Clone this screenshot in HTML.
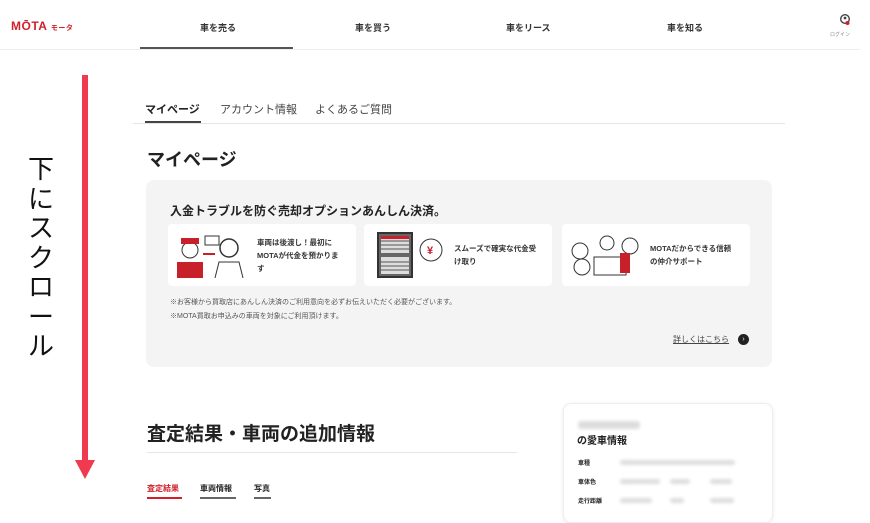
<!DOCTYPE html>
<html><head><meta charset="utf-8"><style>
*{margin:0;padding:0;box-sizing:border-box}
body{width:870px;height:509px;overflow:hidden;background:#fff;font-family:"Liberation Sans","Noto Sans CJK JP",sans-serif;color:#222;position:relative}
.a{position:absolute;white-space:nowrap}
.nav{font-size:9px;font-weight:bold;color:#333}
.card{position:absolute;background:#fff;border-radius:4px;top:224px;height:62px;width:188px}
.ct{position:absolute;font-size:7.5px;font-weight:bold;line-height:13px;color:#333}
.blur{position:absolute;height:5px;background:#ddd;border-radius:3px;filter:blur(1.5px)}
</style></head><body>
<div class="a" style="left:11px;top:19px;font-size:12px;font-weight:bold;color:#d0202a;letter-spacing:0.5px">MŌTA <span style="font-size:7px">モータ</span></div>
<div class="a nav" style="left:200px;top:21px">車を売る</div>
<div class="a nav" style="left:355px;top:21px">車を買う</div>
<div class="a nav" style="left:506px;top:21px">車をリース</div>
<div class="a nav" style="left:667px;top:21px">車を知る</div>
<svg class="a" style="left:839px;top:14px" width="12" height="13" viewBox="0 0 12 13"><circle cx="6" cy="5" r="4.3" fill="none" stroke="#444" stroke-width="1.4"/><circle cx="6" cy="4" r="1.4" fill="#444"/><circle cx="8.5" cy="9" r="2" fill="#d0202a"/></svg>
<div class="a" style="left:830px;top:31px;font-size:5px;color:#888">ログイン</div>
<div class="a" style="left:0;top:49px;width:860px;height:1px;background:#eee"></div>
<div class="a" style="left:140px;top:47px;width:153px;height:2px;background:#555"></div>

<div class="a" style="left:82px;top:75px;width:6px;height:392px;background:#f03a4f"></div>
<svg class="a" style="left:75px;top:460px" width="20" height="20"><polygon points="0,0 20,0 10,19" fill="#f03a4f"/></svg>
<div class="a" style="left:26px;top:155px;width:30px;font-size:26px;line-height:29.5px;white-space:normal;text-align:center;color:#111">下にスクロール</div>

<div class="a" style="left:145px;top:101px;font-size:11px;font-weight:bold">マイページ</div>
<div class="a" style="left:220px;top:101px;font-size:11px;color:#444">アカウント情報</div>
<div class="a" style="left:315px;top:101px;font-size:11px;color:#444">よくあるご質問</div>
<div class="a" style="left:133px;top:123px;width:652px;height:1px;background:#e5e5e5"></div>
<div class="a" style="left:145px;top:121px;width:56px;height:2px;background:#444"></div>

<div class="a" style="left:147px;top:146px;font-size:18px;font-weight:600">マイページ</div>
<div class="a" style="left:146px;top:180px;width:626px;height:187px;background:#f4f4f4;border-radius:8px"></div>
<div class="a" style="left:170px;top:202px;font-size:12px;font-weight:bold">入金トラブルを防ぐ売却オプションあんしん決済。</div>
<div class="card" style="left:168px"></div>
<div class="card" style="left:364px"></div>
<div class="card" style="left:562px"></div>
<svg class="a" style="left:175px;top:232px" width="72" height="46"><rect x="30" y="4" width="14" height="9" fill="none" stroke="#333"/><rect x="2" y="30" width="26" height="16" fill="#c8202a"/><circle cx="15" cy="18" r="8" fill="#fff" stroke="#333"/><rect x="6" y="6" width="18" height="6" fill="#c8202a"/><line x1="28" y1="22" x2="40" y2="22" stroke="#c8202a" stroke-width="2"/><circle cx="54" cy="16" r="9" fill="#fff" stroke="#333" stroke-width="1.5"/><path d="M40 46 L44 30 L64 30 L68 46" fill="none" stroke="#333"/></svg>
<div class="ct" style="left:257px;top:236px">車両は後渡し！最初に<br>MOTAが代金を預かりま<br>す</div>
<svg class="a" style="left:376px;top:231px" width="70" height="48"><rect x="2" y="2" width="34" height="44" fill="#666" stroke="#333" stroke-width="2"/><rect x="5" y="5" width="28" height="17" fill="#ddd"/><rect x="5" y="26" width="28" height="17" fill="#ddd"/><g stroke="#555"><line x1="5" y1="10" x2="33" y2="10"/><line x1="5" y1="14" x2="33" y2="14"/><line x1="5" y1="18" x2="33" y2="18"/><line x1="5" y1="31" x2="33" y2="31"/><line x1="5" y1="35" x2="33" y2="35"/><line x1="5" y1="39" x2="33" y2="39"/></g><rect x="5" y="5" width="28" height="3" fill="#c8202a"/><circle cx="55" cy="19" r="11" fill="#fff" stroke="#333"/><text x="51" y="23" font-size="11" fill="#c8202a" font-weight="bold">¥</text></svg>
<div class="ct" style="left:454px;top:242px">スムーズで確実な代金受<br>け取り</div>
<svg class="a" style="left:570px;top:231px" width="72" height="48"><circle cx="10" cy="20" r="8" fill="none" stroke="#333"/><circle cx="12" cy="36" r="8" fill="none" stroke="#333"/><circle cx="60" cy="15" r="8" fill="none" stroke="#333"/><circle cx="37" cy="12" r="7" fill="#fff" stroke="#333"/><rect x="24" y="26" width="32" height="18" fill="#fff" stroke="#333"/><rect x="50" y="22" width="10" height="20" fill="#c8202a"/></svg>
<div class="ct" style="left:650px;top:242px">MOTAだからできる信頼<br>の仲介サポート</div>
<div class="a" style="left:170px;top:296px;font-size:7px;line-height:14px;color:#555">※お客様から買取店にあんしん決済のご利用意向を必ずお伝えいただく必要がございます。<br>※MOTA買取お申込みの車両を対象にご利用頂けます。</div>
<div class="a" style="left:673px;top:334px;font-size:8px;color:#444;text-decoration:underline">詳しくはこちら</div>
<div class="a" style="left:738px;top:334px;width:11px;height:11px;border-radius:50%;background:#222;color:#fff;font-size:7px;line-height:11px;text-align:center">›</div>

<div class="a" style="left:147px;top:419px;font-size:19px;font-weight:600">査定結果・車両の追加情報</div>
<div class="a" style="left:147px;top:452px;width:370px;height:1px;background:#e5e5e5"></div>
<div class="a" style="left:147px;top:483px;font-size:8px;font-weight:bold;color:#d0202a">査定結果</div>
<div class="a" style="left:200px;top:483px;font-size:8px;font-weight:bold">車両情報</div>
<div class="a" style="left:254px;top:483px;font-size:8px;font-weight:bold">写真</div>
<div class="a" style="left:147px;top:497px;width:35px;height:2px;background:#d0202a"></div>
<div class="a" style="left:200px;top:497px;width:36px;height:2px;background:#666"></div>
<div class="a" style="left:254px;top:497px;width:17px;height:2px;background:#666"></div>

<div class="a" style="left:563px;top:403px;width:210px;height:120px;background:#fff;border:1px solid #eee;border-radius:8px;box-shadow:0 1px 4px rgba(0,0,0,.08)"></div>
<div class="blur" style="left:578px;top:421px;width:62px;height:8px"></div>
<div class="a" style="left:577px;top:432px;font-size:10px;font-weight:bold">の愛車情報</div>
<div class="a" style="left:578px;top:458px;font-size:6px;font-weight:bold">車種</div>
<div class="a" style="left:578px;top:477px;font-size:6px;font-weight:bold">車体色</div>
<div class="a" style="left:578px;top:496px;font-size:6px;font-weight:bold">走行距離</div>
<div class="blur" style="left:620px;top:460px;width:115px"></div>
<div class="blur" style="left:620px;top:479px;width:40px"></div><div class="blur" style="left:670px;top:479px;width:20px"></div><div class="blur" style="left:710px;top:479px;width:22px"></div>
<div class="blur" style="left:620px;top:498px;width:32px"></div><div class="blur" style="left:670px;top:498px;width:14px"></div><div class="blur" style="left:710px;top:498px;width:24px"></div>
</body></html>
